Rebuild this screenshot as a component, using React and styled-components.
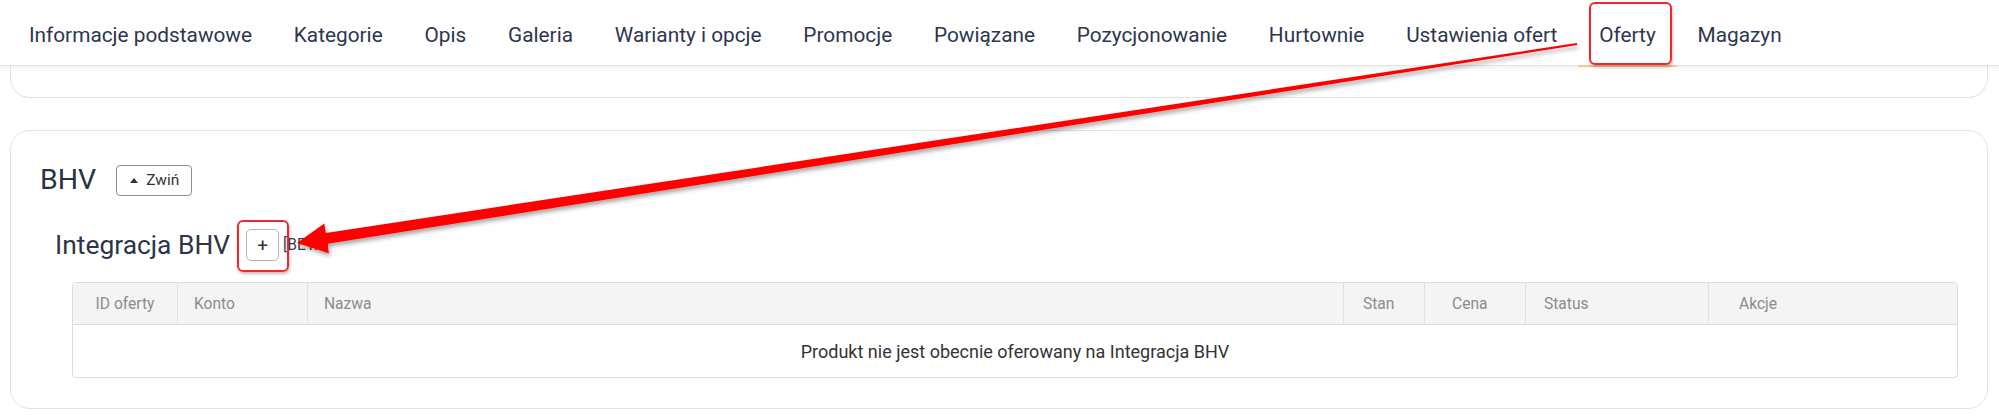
import React from 'react';
import styled, { createGlobalStyle } from 'styled-components';

const GlobalStyle = createGlobalStyle`
  html, body { margin: 0; padding: 0; background: #fff; }
  body {
    font-family: Roboto, "Liberation Sans", Arial, sans-serif;
    width: 1999px;
    height: 416px;
    overflow: hidden;
  }
  * { box-sizing: border-box; }
`;

const Page = styled.div`
  position: relative;
  width: 1999px;
  height: 416px;
  overflow: hidden;
  background: #fff;
`;

const Nav = styled.nav`
  position: relative;
  z-index: 2;
  display: flex;
  height: 66px;
  padding-left: 8px;
  background: #fff;
  border-bottom: 1px solid #e4e4e4;
  box-shadow: 0 2px 4px rgba(0, 0, 0, 0.06);
`;

const Tab = styled.a`
  position: relative;
  display: flex;
  align-items: center;
  align-self: flex-start;
  height: 67px;
  padding: 5px 20.9px 0;
  font-size: 20.8px;
  color: #2e3650;
  text-decoration: none;
  white-space: nowrap;
  border-bottom: 2px solid ${(p) => (p.$active ? '#f7c398' : 'transparent')};
`;

const Highlight = styled.span`
  position: absolute;
  left: ${(p) => p.$left}px;
  top: ${(p) => p.$top}px;
  width: ${(p) => p.$w}px;
  height: ${(p) => p.$h}px;
  border: 2px solid #f2272b;
  border-radius: 6px;
  box-shadow: 1px 2px 3px rgba(0, 0, 0, 0.25);
  pointer-events: none;
`;

const Main = styled.main`
  padding: 0 11px 0 10px;
`;

const PrevCard = styled.div`
  height: 32px;
  border: 1px solid #e3e3e3;
  border-top: none;
  border-radius: 0 0 20px 20px;
`;

const Card = styled.section`
  margin-top: 32px;
  border: 1px solid #e3e3e3;
  border-radius: 20px;
  padding: 31px 29px 30px 29px;
`;

const HeadingRow = styled.div`
  display: flex;
  align-items: center;
  gap: 20px;
  height: 36px;
`;

const Title = styled.h2`
  margin: 0;
  font-size: 28.5px;
  line-height: 36px;
  font-weight: 400;
  color: #2a3346;
`;

const ToggleButton = styled.button`
  display: flex;
  align-items: center;
  gap: 8px;
  height: 31px;
  padding: 0 12px 0 13px;
  border: 1px solid #8f8f8f;
  border-radius: 4px;
  background: #fff;
  font-family: inherit;
  font-size: 15.5px;
  color: #333;
`;

const Caret = styled.span`
  width: 0;
  height: 0;
  border-left: 4.5px solid transparent;
  border-right: 4.5px solid transparent;
  border-bottom: 5px solid #333;
`;

const Section = styled.div`
  margin-top: 29px;
  padding-left: 15px;
`;

const SubRow = styled.div`
  display: flex;
  align-items: center;
  height: 36px;
`;

const SubTitle = styled.h3`
  margin: 0 16px 0 0;
  font-size: 26.4px;
  line-height: 36px;
  font-weight: 400;
  color: #2c3549;
`;

const AddButton = styled.button`
  position: relative;
  display: flex;
  align-items: center;
  justify-content: center;
  width: 33px;
  height: 32px;
  padding: 0;
  border: 1px solid #b3b3b3;
  border-radius: 5px;
  background: #fff;
  font-family: inherit;
  font-size: 19px;
  color: #333;
`;

const Beta = styled.span`
  margin-left: 4px;
  font-size: 15.6px;
  color: #3a3f4d;
`;

const Table = styled.div`
  margin: 19px 0 0 17px;
  border: 1px solid #dcdcdc;
  border-radius: 4px;
  overflow: hidden;
`;

const HeadRow = styled.div`
  display: grid;
  grid-template-columns: 105px 130px 1fr 81px 101px 183px 248px;
  background: #f4f4f4;
  border-bottom: 1px solid #dcdcdc;
`;

const HeadCell = styled.div`
  display: flex;
  align-items: center;
  justify-content: ${(p) => (p.$center ? 'center' : 'flex-start')};
  height: 41px;
  padding-left: ${(p) => (p.$center ? 0 : p.$pad)}px;
  border-right: ${(p) => (p.$last ? 'none' : '1px solid #e2e2e2')};
  font-size: 15.6px;
  color: #8c8c8c;
  white-space: nowrap;
`;

const EmptyRow = styled.div`
  display: flex;
  align-items: center;
  justify-content: center;
  height: 52px;
  font-size: 18px;
  color: #333;
`;

const ArrowLayer = styled.svg`
  position: absolute;
  left: 0;
  top: 0;
  z-index: 5;
  pointer-events: none;
  overflow: visible;
`;

const tabs = [
  'Informacje podstawowe',
  'Kategorie',
  'Opis',
  'Galeria',
  'Warianty i opcje',
  'Promocje',
  'Powiązane',
  'Pozycjonowanie',
  'Hurtownie',
  'Ustawienia ofert',
  'Oferty',
  'Magazyn',
];

const columns = [
  { label: 'ID oferty', center: true },
  { label: 'Konto', pad: 16 },
  { label: 'Nazwa', pad: 16 },
  { label: 'Stan', pad: 19 },
  { label: 'Cena', pad: 27 },
  { label: 'Status', pad: 18 },
  { label: 'Akcje', pad: 30 },
];

function Arrow() {
  const S = [1577, 44];
  const T = [297, 243];
  const dx = T[0] - S[0];
  const dy = T[1] - S[1];
  const L = Math.hypot(dx, dy);
  const u = [dx / L, dy / L];
  const n = [-u[1], u[0]];
  const headLen = 30;
  const B = [T[0] - u[0] * headLen, T[1] - u[1] * headLen];
  const pt = (P, k) => `${(P[0] + n[0] * k).toFixed(1)},${(P[1] + n[1] * k).toFixed(1)}`;
  const points = [
    pt(S, -1),
    pt(B, -5.5),
    pt(B, -15),
    `${T[0]},${T[1]}`,
    pt(B, 15),
    pt(B, 5.5),
    pt(S, 1),
  ].join(' ');
  return (
    <ArrowLayer width="1999" height="416" viewBox="0 0 1999 416">
      <defs>
        <filter id="arrowShadow" x="-5%" y="-50%" width="110%" height="200%">
          <feDropShadow dx="1.5" dy="3" stdDeviation="2.2" floodColor="#000" floodOpacity="0.35" />
        </filter>
      </defs>
      <polygon points={points} fill="#ff0000" filter="url(#arrowShadow)" />
    </ArrowLayer>
  );
}

export default function App() {
  return (
    <>
      <GlobalStyle />
      <Page>
        <Nav>
          {tabs.map((t) => (
            <Tab key={t} $active={t === 'Oferty'}>
              {t}
              {t === 'Oferty' && <Highlight $left={11} $top={2} $w={83} $h={63} />}
            </Tab>
          ))}
        </Nav>
        <Main>
          <PrevCard />
          <Card>
            <HeadingRow>
              <Title>BHV</Title>
              <ToggleButton>
                <Caret />
                Zwiń
              </ToggleButton>
            </HeadingRow>
            <Section>
              <SubRow>
                <SubTitle>Integracja BHV</SubTitle>
                <AddButton>
                  +
                  <Highlight $left={-10} $top={-10} $w={52} $h={52} />
                </AddButton>
                <Beta>[BETA]</Beta>
              </SubRow>
              <Table>
                <HeadRow>
                  {columns.map((c, i) => (
                    <HeadCell
                      key={c.label}
                      $center={c.center}
                      $pad={c.pad}
                      $last={i === columns.length - 1}
                    >
                      {c.label}
                    </HeadCell>
                  ))}
                </HeadRow>
                <EmptyRow>Produkt nie jest obecnie oferowany na Integracja BHV</EmptyRow>
              </Table>
            </Section>
          </Card>
        </Main>
        <Arrow />
      </Page>
    </>
  );
}
